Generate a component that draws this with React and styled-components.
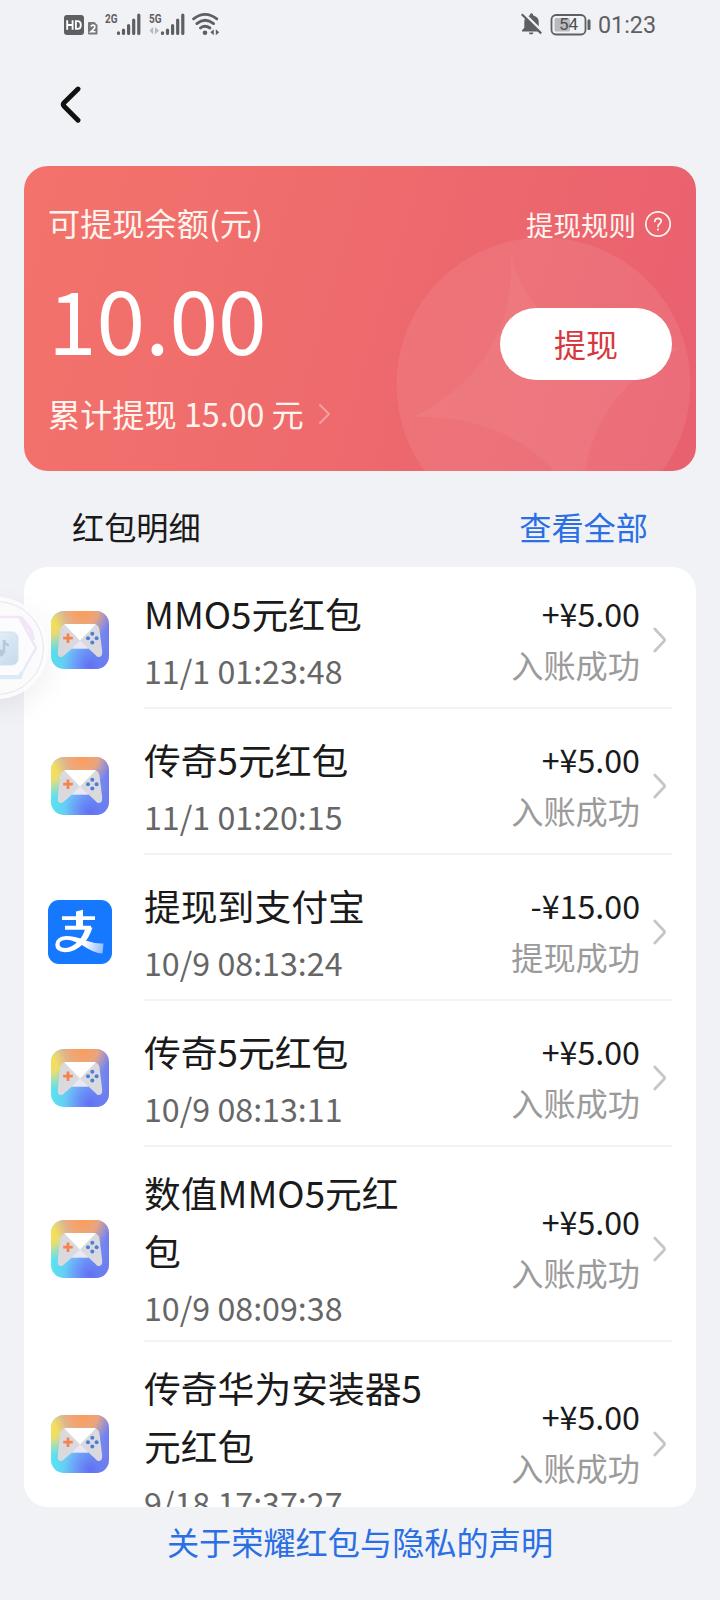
import React from "react";
import styled, { createGlobalStyle } from "styled-components";

const GlobalStyle = createGlobalStyle`
  *, *::before, *::after { box-sizing: border-box; }
  body { margin: 0; background: #f1f2f6; }
`;

const Screen = styled.div`
  position: relative;
  width: 720px;
  height: 1600px;
  overflow: hidden;
  display: flex;
  flex-direction: column;
  background: #f1f2f6;
  color: #1a1a1a;
  font-family: "Noto Sans CJK SC", "Noto Sans", sans-serif;
`;

const StatusBar = styled.header`
  display: flex;
  justify-content: space-between;
  align-items: flex-start;
  height: 48px;
  padding: 12px 64px 0;
  svg { display: block; }
`;

const StatusGroup = styled.div`
  display: flex;
  align-items: flex-start;
  gap: ${(p) => p.$gap}px;
`;

const Clock = styled.span`
  font: 400 23.3px/27px Roboto, sans-serif;
  color: #5e5f62;
`;

const NavBar = styled.nav`
  height: 118px;
  padding: 38px 0 0 60px;
`;

const BackButton = styled.button`
  display: block;
  padding: 0;
  border: 0;
  background: none;
  svg { display: block; }
`;

const BalanceCard = styled.section`
  position: relative;
  margin: 0 24px;
  height: 305px;
  padding: 33px 24px 0;
  border-radius: 24px;
  overflow: hidden;
  color: #fff;
  background: linear-gradient(106deg, #f3736b 0%, #ee6a6d 50%, #e9606f 100%);
`;

const CardPattern = styled.svg`
  position: absolute;
  left: 0;
  top: 0;
`;

const CardContent = styled.div`
  position: relative;
  display: flex;
  justify-content: space-between;
`;

const CardColumn = styled.div`
  display: flex;
  flex-direction: column;
  align-items: ${(p) => p.$align};
`;

const CardLabel = styled.div`
  font-size: 32.2px;
  line-height: 46px;
  color: #fff4ee;
`;

const Balance = styled.div`
  height: 100px;
  margin: 22px 0 22px;
  font-size: 87.5px;
  line-height: 100px;
`;

const TotalLine = styled.div`
  display: flex;
  align-items: center;
  gap: 14px;
  font-size: 32.2px;
  line-height: 48px;
  color: #fff4ee;
  svg { margin-top: 2px; }
`;

const RulesLink = styled.div`
  display: flex;
  align-items: center;
  gap: 9px;
  height: 50px;
  font-size: 27.5px;
  color: #fff4ee;
`;

const WithdrawButton = styled.button`
  width: 172px;
  height: 72px;
  margin-top: 59px;
  padding: 0 0 2px;
  border: 0;
  border-radius: 36px;
  background: #fff;
  color: #d8383d;
  font: 400 32px/70px "Noto Sans CJK SC", sans-serif;
`;

const SectionHead = styled.div`
  display: flex;
  justify-content: space-between;
  height: 96px;
  padding: 31px 72px 0;
  font-size: 32.2px;
  line-height: 48px;
`;

const BlueLink = styled.a`
  color: #2b6fe4;
`;

const List = styled.ul`
  height: 940px;
  margin: 0 24px;
  padding: 0;
  list-style: none;
  border-radius: 24px;
  overflow: hidden;
  background: #fff;
`;

const Row = styled.li`
  display: flex;
  flex-direction: column;
  padding: 5px 24px 4px;
`;

const RowMain = styled.div`
  display: flex;
  align-items: center;
  min-height: 135px;
  padding: 7px 0 6px;
`;

const IconSlot = styled.div`
  flex: none;
  display: flex;
  justify-content: center;
  width: 64px;
  margin-right: 32px;
  svg { display: block; }
`;

const Details = styled.div`
  width: 290px;
  padding-bottom: 2px;
`;

const Title = styled.div`
  margin-bottom: 3px;
  font-size: 36.8px;
  line-height: 58px;
`;

const Time = styled.div`
  font-size: 32.2px;
  line-height: 50px;
  color: #666;
`;

const Outcome = styled.div`
  flex: 1;
  padding-bottom: 3px;
  text-align: right;
  white-space: nowrap;
`;

const Amount = styled.div`
  font-size: 32.2px;
  line-height: 50px;
`;

const State = styled.div`
  font-size: 32.2px;
  line-height: 52px;
  color: #9b9b9b;
`;

const RowArrow = styled.svg`
  flex: none;
  margin: 0 5px 0 13px;
`;

const Divider = styled.div`
  height: 2px;
  margin-left: 96px;
  background: #f3f3f4;
`;

const Footer = styled.footer`
  padding-top: 10px;
  text-align: center;
  font-size: 32.2px;
  line-height: 48px;
`;

const FloatingBall = styled.div`
  position: absolute;
  left: -54px;
  top: 597px;
  width: 102px;
  height: 102px;
  border-radius: 50%;
  background: rgba(252, 252, 253, 0.9);
  box-shadow: 3px 10px 28px rgba(0, 0, 0, 0.06);
  svg { display: block; opacity: 0.75; }
`;

const GREY = "#5e5f62";

const HdIcon = () => (
  <svg width="34" height="25" viewBox="0 0 34 25">
    <rect x="0" y="3" width="20" height="20" rx="3" fill={GREY} />
    <path d="M3.200 8.200v9.600M8.600 8.200v9.600M3.200 13h5.400M11.900 9.100v7.800h1.500q3.400 0 3.400-3.900t-3.400-3.900z" fill="none" stroke="#fff" strokeWidth="1.900" />
    <path d="M24 11q0-1 1-1h5.500l3 3v8.500q0 1-1 1H25q-1 0-1-1z" fill="#77787b" />
    <path d="M26.700 14.300q2.300-2.200 4.100-.3.900 1.900-4 5.800H31.500" fill="none" stroke="#fff" strokeWidth="1.600" />
  </svg>
);

const SignalIcon = ({ label, data }) => (
  <svg width="36" height="25" viewBox="0 0 36 25">
    <text x="0" y="10.700" fontFamily="Roboto, sans-serif" fontWeight="700" fontSize="12.500" textLength="12.500" lengthAdjust="spacingAndGlyphs" fill={GREY}>{label}</text>
    <g stroke={GREY} strokeWidth="3.200" strokeLinecap="round">
      <path d="M13.500 20.800v.6M18.500 18v3.400M23.600 13.500v7.900M28.700 8v13.400M33.800 3v18.400" />
    </g>
    {data && <path d="M4.200 15v7.500L.5 18.500zM6 15v7.500l4-4z" fill="#b9babd" />}
  </svg>
);

const WifiIcon = () => (
  <svg width="28" height="25" viewBox="0 0 28 25">
    <g fill="none" stroke={GREY} strokeWidth="2.800" strokeLinecap="round">
      <path d="M1.600 6.800Q13 -2 24.800 6.800" />
      <path d="M4.800 11.600Q13 5 21.600 11.600" />
      <path d="M8.400 16Q13 12.400 18 16" />
    </g>
    <circle cx="13" cy="20.800" r="2.300" fill={GREY} />
    <path d="M21.800 17.300v6l-3.400-3zM23.800 17.300v6l3.400-3z" fill={GREY} />
  </svg>
);

const MutedBellIcon = () => (
  <svg width="22" height="25" viewBox="0 0 22 25">
    <path d="M1 19.500v-1.300l2.300-2.400V9.800q0-5 5.300-6.400Q9 1.200 10.500 1.200t1.900 2.200q5.300 1.400 5.300 6.400v6l2.300 2.400v1.300z" fill={GREY} />
    <path d="M7.800 20.500h4.700q-.3 2-2.350 2t-2.350-2z" fill={GREY} />
    <path d="M1.800 .4l19.600 19.600" stroke="#f1f2f6" strokeWidth="2.800" />
    <path d="M.8 2.200l19.400 19.200" stroke={GREY} strokeWidth="2.200" />
  </svg>
);

const BatteryIcon = () => (
  <svg width="41" height="25" viewBox="0 0 41 25">
    <rect x="1.500" y="3" width="34" height="19.500" rx="4.500" fill="none" stroke={GREY} strokeWidth="1.800" />
    <rect x="4.500" y="6" width="15.500" height="13.500" rx="1.500" fill="#b9babd" />
    <text x="18.500" y="18.300" textAnchor="middle" fontFamily="Roboto, sans-serif" fontWeight="400" fontSize="17" fill="#4e4f52">54</text>
    <rect x="37.500" y="7.500" width="3" height="10.500" rx="1.200" fill={GREY} />
  </svg>
);

const GameIcon = () => (
  <svg width="58" height="58" viewBox="0 0 58 58">
    <defs>
      <linearGradient id="gameBase" x1="0" y1="0" x2="1" y2="0">
        <stop offset="0" stopColor="#58e6ee" />
        <stop offset=".45" stopColor="#72b8fb" />
        <stop offset="1" stopColor="#727cec" />
      </linearGradient>
      <radialGradient id="gameYellow" cx="0" cy=".22" r=".48">
        <stop offset="0" stopColor="#fbe04f" />
        <stop offset=".4" stopColor="#f6dd66" stopOpacity=".9" />
        <stop offset="1" stopColor="#d9e09a" stopOpacity="0" />
      </radialGradient>
      <radialGradient id="gameOrange" cx=".55" cy="0" r=".52">
        <stop offset="0" stopColor="#fd9c58" />
        <stop offset=".5" stopColor="#f8a670" stopOpacity=".9" />
        <stop offset="1" stopColor="#d8a0a8" stopOpacity="0" />
      </radialGradient>
      <radialGradient id="gameBlue" cx=".68" cy=".95" r=".45">
        <stop offset="0" stopColor="#626ff3" />
        <stop offset="1" stopColor="#627af3" stopOpacity="0" />
      </radialGradient>
      <clipPath id="padClip">
        <path d="M16 13h26q5.500 0 6.500 5.500l2.700 22Q51.500 46 47.500 46q-1.500 0-3.500-2.500L37.500 37.500H21L14 43.500Q11.800 46 10 46q-3.700 0-3.200-5.500l2.400-22Q10.500 13 16 13z" />
      </clipPath>
    </defs>
    <rect width="58" height="58" rx="13" fill="url(#gameBase)" />
    <rect width="58" height="58" rx="13" fill="url(#gameBlue)" />
    <rect width="58" height="58" rx="13" fill="url(#gameYellow)" />
    <rect width="58" height="58" rx="13" fill="url(#gameOrange)" />
    <g clipPath="url(#padClip)">
      <rect width="58" height="58" fill="#dadade" />
      <path d="M12 12h34L29 29.500z" fill="#fff" />
      <path d="M29 29.500l9 9H20z" fill="#e9e8fb" />
    </g>
    <path d="M17 22.500v9.500M12.200 27.200h9.600" stroke="#f5824f" strokeWidth="2.800" />
    <g fill="#4d7fd8">
      <circle cx="41.300" cy="22.800" r="2" />
      <circle cx="41.300" cy="31.600" r="2" />
      <circle cx="37" cy="27.200" r="2" />
      <circle cx="45.600" cy="27.200" r="2" />
    </g>
  </svg>
);

const AlipayIcon = () => (
  <svg width="64" height="64" viewBox="0 0 64 64">
    <defs>
      <linearGradient id="aliTail" gradientUnits="userSpaceOnUse" x1="24" y1="38" x2="55" y2="50">
        <stop offset="0" stopColor="#fff" />
        <stop offset=".4" stopColor="#fff" />
        <stop offset="1" stopColor="#8dbbff" />
      </linearGradient>
    </defs>
    <rect width="64" height="64" rx="11" fill="#1677ff" />
    <path d="M14 16.200h33v3.900H14zM28 11.500l7-1.700v17h-7zM17 25.800h26v3.900H17z" fill="#fff" />
    <path d="M37.500 27.500h7Q41.500 37.500 35.500 43.500 27 52.300 17 52.300 7.300 51.700 7.300 44.500 8 37 18 36.100 26 36 37 40.300 47 44 55.500 43.400L54.500 53.500q-6 0-15-5Q26 39.800 18.500 39.800q-7 .3-7 4.300 0 3.900 5.800 3.900Q24 47.700 30.300 41 35.700 35.500 37.500 27.500z" fill="url(#aliTail)" />
  </svg>
);

const Chevron = ({ color }) => (
  <RowArrow width="14" height="26" viewBox="0 0 14 26">
    <path d="M1.800 2l9.400 10q.8 1 0 2l-9.400 10" fill="none" stroke={color} strokeWidth="2.700" strokeLinecap="round" />
  </RowArrow>
);

const records = [
  { title: "MMO5元红包", time: "11/1 01:23:48", amount: "+¥5.00", state: "入账成功" },
  { title: "传奇5元红包", time: "11/1 01:20:15", amount: "+¥5.00", state: "入账成功" },
  { title: "提现到支付宝", time: "10/9 08:13:24", amount: "-¥15.00", state: "提现成功", alipay: true },
  { title: "传奇5元红包", time: "10/9 08:13:11", amount: "+¥5.00", state: "入账成功" },
  { title: "数值MMO5元红包", time: "10/9 08:09:38", amount: "+¥5.00", state: "入账成功" },
  { title: "传奇华为安装器5元红包", time: "9/18 17:37:27", amount: "+¥5.00", state: "入账成功" },
];

const Record = ({ item }) => (
  <Row>
    <RowMain>
      <IconSlot>{item.alipay ? <AlipayIcon /> : <GameIcon />}</IconSlot>
      <Details>
        <Title>{item.title}</Title>
        <Time>{item.time}</Time>
      </Details>
      <Outcome>
        <Amount>{item.amount}</Amount>
        <State>{item.state}</State>
      </Outcome>
      <Chevron color="#c6c6c8" />
    </RowMain>
    <Divider />
  </Row>
);

export default function App() {
  return (
    <Screen>
      <GlobalStyle />
      <StatusBar>
        <StatusGroup $gap={7.3}>
          <HdIcon />
          <SignalIcon label="2G" />
          <SignalIcon label="5G" data />
          <WifiIcon />
        </StatusGroup>
        <StatusGroup $gap={7}>
          <MutedBellIcon />
          <BatteryIcon />
          <Clock>01:23</Clock>
        </StatusGroup>
      </StatusBar>
      <NavBar>
        <BackButton aria-label="返回">
          <svg width="22" height="38" viewBox="0 0 22 38">
            <path d="M18 3L4.300 16.600q-2 2 0 4L18 34.200" fill="none" stroke="#111" strokeWidth="4.900" strokeLinecap="round" strokeLinejoin="round" />
          </svg>
        </BackButton>
      </NavBar>
      <BalanceCard>
        <CardPattern width="672" height="305" viewBox="24 166 672 305">
          <circle cx="543.500" cy="384.500" r="147" fill="#fff" fillOpacity=".08" />
          <path d="M511 253Q529 352 681 347 578 401 583 513 531 414 413 417 516 365 511 253z" fill="#fff" fillOpacity=".05" />
        </CardPattern>
        <CardContent>
          <CardColumn $align="flex-start">
            <CardLabel>可提现余额(元)</CardLabel>
            <Balance>10.00</Balance>
            <TotalLine>
              累计提现 15.00 元
              <svg width="14" height="22" viewBox="0 0 14 22">
                <path d="M2 2l9 9-9 9" fill="none" stroke="#fff" strokeOpacity=".34" strokeWidth="2.300" strokeLinecap="round" strokeLinejoin="round" />
              </svg>
            </TotalLine>
          </CardColumn>
          <CardColumn $align="flex-end">
            <RulesLink>
              提现规则
              <svg width="27" height="27" viewBox="0 0 27 27" fill="none" stroke="#fff4ee" strokeWidth="1.700">
                <circle cx="13" cy="13" r="12.200" />
                <path d="M9.800 10.500q.2-3.200 3.200-3.200 3.100.1 3.200 2.800 0 1.500-1.600 2.700-1.600 1.100-1.600 2.700" strokeLinecap="round" />
                <path d="M13 17.500v2" />
              </svg>
            </RulesLink>
            <WithdrawButton>提现</WithdrawButton>
          </CardColumn>
        </CardContent>
      </BalanceCard>
      <SectionHead>
        <span>红包明细</span>
        <BlueLink>查看全部</BlueLink>
      </SectionHead>
      <List>
        {records.map((item, i) => (
          <Record key={i} item={item} />
        ))}
      </List>
      <Footer>
        <BlueLink>关于荣耀红包与隐私的声明</BlueLink>
      </Footer>
      <FloatingBall>
        <svg width="102" height="102" viewBox="0 0 102 102">
          <defs>
            <linearGradient id="ballEdge" x1="0" y1="0" x2="0" y2="1">
              <stop offset="0" stopColor="#f3dff6" />
              <stop offset=".5" stopColor="#e9e0f6" />
              <stop offset="1" stopColor="#dbeaf7" />
            </linearGradient>
            <linearGradient id="ballTile" x1="0" y1="0" x2="1" y2="1">
              <stop offset="0" stopColor="#e6f0f8" />
              <stop offset="1" stopColor="#b4d0ea" />
            </linearGradient>
          </defs>
          <circle cx="51" cy="51" r="46.500" fill="#fbfbfd" stroke="#dedee2" strokeWidth="1" />
          <path d="M33 20h40l17 31-17 30H33L16 51z" fill="#fdfdff" stroke="url(#ballEdge)" strokeWidth="2.500" />
          <path d="M74 20l6 7 5 7 2 9" fill="none" stroke="#ecdff5" strokeWidth="4" />
          <path d="M52 80h22l2-5" fill="none" stroke="#d3e6f6" strokeWidth="4" />
          <rect x="36" y="35" width="36" height="33" rx="6" fill="url(#ballTile)" stroke="#c6dbec" />
          <path d="M58 43v13M58 43q1 5 5 5" stroke="#9fb9d2" strokeWidth="2.500" fill="none" />
          <circle cx="54.500" cy="56" r="3.500" fill="#9fb9d2" />
        </svg>
      </FloatingBall>
    </Screen>
  );
}
